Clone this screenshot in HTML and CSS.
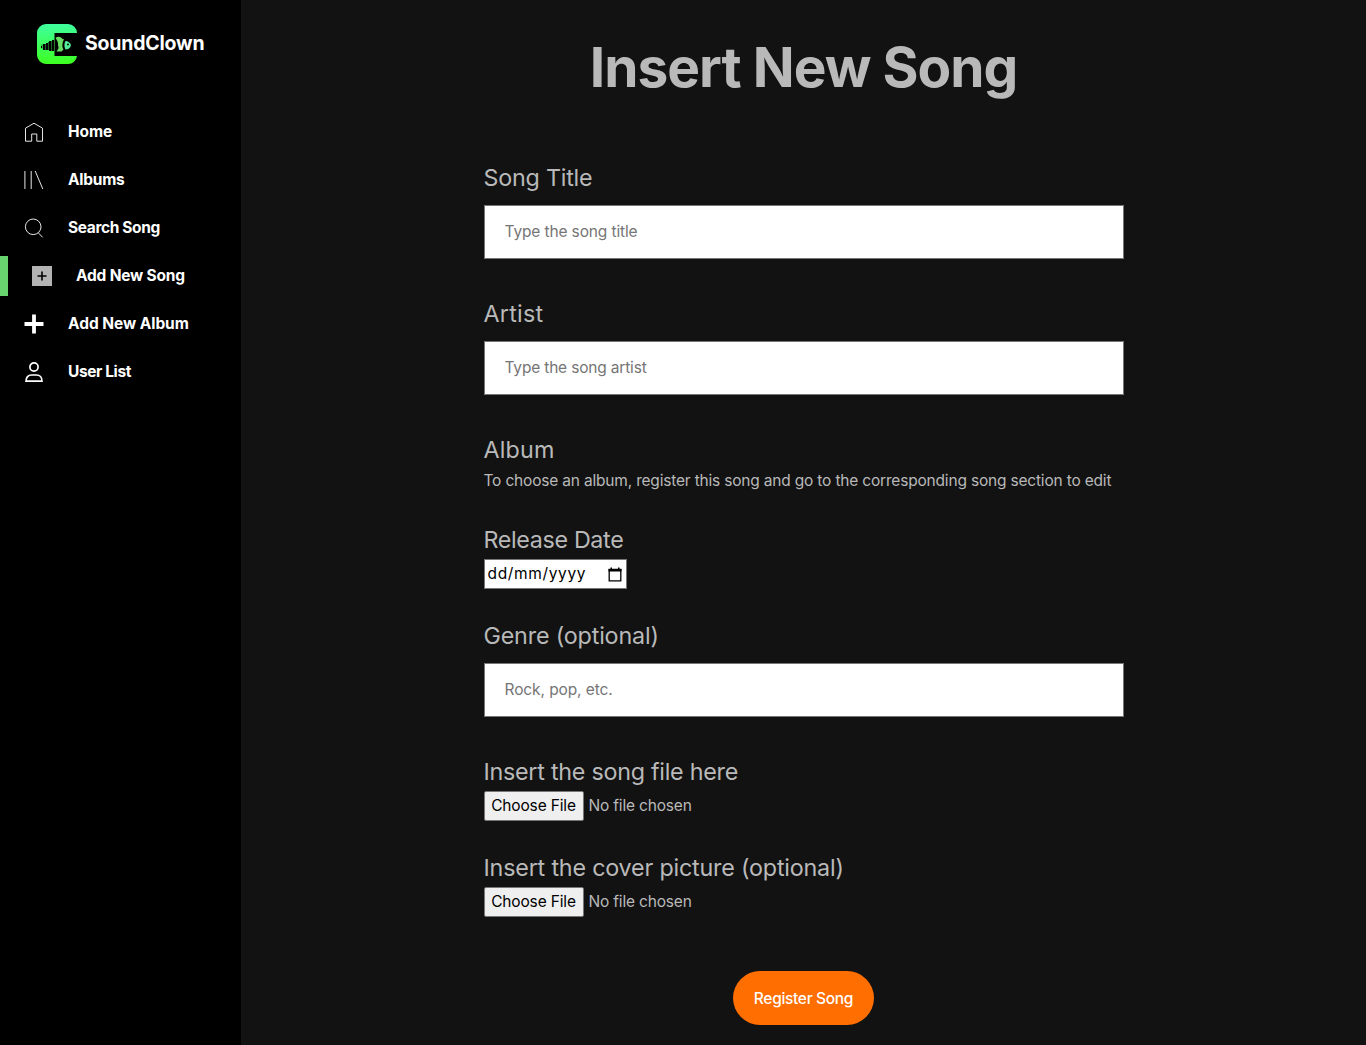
FILE: index.html
```html
<!DOCTYPE html>
<html lang="en">
<head>
<meta charset="utf-8">
<title>SoundClown</title>
<link rel="stylesheet" href="styles.css">
</head>
<body>
<aside class="sidebar">
  <a class="brand">
    <svg class="logo" width="40" height="40" viewBox="0 0 40 40">
      <defs><linearGradient id="lg" x1="0" y1="0" x2="0" y2="1"><stop offset="0" stop-color="#3fff9f"/><stop offset="1" stop-color="#3dff20"/></linearGradient></defs>
      <path fill="url(#lg)" d="M9 0h22a9 9 0 0 1 9 9H17.5v23H40a9 9 0 0 1-9 8H9a9 9 0 0 1-9-9V9a9 9 0 0 1 9-9z"/>
      <path d="M4 22h1v2H4zM6 20h2v6H6zM9 19h2v7H9zM12 17h2v10h-2zM15 16h2v11h-2z"/>
      <path stroke="#000" stroke-opacity=".6" d="M5 20.5v4M8.500 20v6M11.500 18v8M14.500 17v10"/>
      <path fill="#67df65" d="M18.500 14c2-2 5-1.500 6.500.5l2 1c-2 3-2 8-.5 10l-2 2h-5c1-2 3-3 1.500-6 .5-3-1-5-2.500-7.500z"/>
      <path fill="#55ef9b" d="M28.500 17c2.500 0 5 2 5.500 4-.5 3-3 4.500-5.500 4.500-1.500-2.500-1.500-6 0-8.500z"/>
      <circle cx="31" cy="20.500" r=".9"/>
    </svg>
    <span class="brand-name">SoundClown</span>
  </a>
  <nav class="menu">
    <a class="item"><svg class="icon thin" viewBox="0 0 20 20"><path d="M1.500 6.200 10 1.200l8.500 5v13h-5.700v-7.200H7.700v7.200H1.500z"/></svg><span class="t-home">Home</span></a>
    <a class="item"><svg class="icon thin" viewBox="0 0 20 20"><path d="M.9 1v18M7.200 1v18M11.200 1l7.600 18"/></svg><span class="t-albums">Albums</span></a>
    <a class="item"><svg class="icon thin" viewBox="0 0 20 20"><circle cx="9.200" cy="8.800" r="7.800"/><path d="m14.300 14.800 4.300 4.500"/></svg><span class="t-search">Search Song</span></a>
    <a class="item active"><svg class="icon" viewBox="0 0 20 20"><path fill="#b3b3b3" d="M0 0h20v20H0z"/><path stroke="#000" stroke-width="1.600" d="M10 5.500v9M5.500 10h9"/></svg><span class="t-song">Add New Song</span></a>
    <a class="item"><svg class="icon" viewBox="0 0 20 20"><path stroke="#fff" stroke-width="3.800" d="M10 .5v19M.5 10h19"/></svg><span class="t-album">Add New Album</span></a>
    <a class="item"><svg class="icon user" viewBox="0 0 20 20"><circle cx="10" cy="5" r="4.100"/><path d="M2 19.200c0-3.800 2.300-6.200 5.500-6.200h5c3.200 0 5.500 2.400 5.500 6.200z"/></svg><span class="t-user">User List</span></a>
  </nav>
</aside>
<main class="content">
  <h1 class="title">Insert New Song</h1>
  <form class="form">
    <div class="field"><label class="l-title">Song Title</label><input class="text p-title" placeholder="Type the song title"></div>
    <div class="field"><label class="l-artist">Artist</label><input class="text p-artist" placeholder="Type the song artist"></div>
    <div class="field short"><label class="l-album">Album</label><p class="note">To choose an album, register this song and go to the corresponding song section to edit</p></div>
    <div class="field compact"><label class="l-date">Release Date</label>
      <div class="date"><span>dd/mm/yyyy</span><svg width="14" height="15" viewBox="0 0 14 15"><path fill="none" stroke="#000" stroke-width="1.300" d="M1.200 2.500h11.600v11.300H1.200z"/><path d="M.5 2h13v2.500H.5zM2.500.5H4V3H2.500zM10 .5h1.500V3H10z"/></svg></div></div>
    <div class="field"><label class="l-genre">Genre (optional)</label><input class="text p-genre" placeholder="Rock, pop, etc."></div>
    <div class="field compact"><label class="l-file">Insert the song file here</label>
      <div class="file"><button type="button" class="choose">Choose File</button><span class="nofile">No file chosen</span></div></div>
    <div class="field compact"><label class="l-cover">Insert the cover picture (optional)</label>
      <div class="file"><button type="button" class="choose">Choose File</button><span class="nofile">No file chosen</span></div></div>
    <button type="button" class="submit">Register Song</button>
  </form>
</main>
</body>
</html>
```
FILE: styles.css
```css
* { box-sizing: border-box; }
body {
  margin: 0;
  height: 1045px;
  display: flex;
  overflow: hidden;
  background: #121212;
  color: #b9b9b9;
  font-family: Inter, "Liberation Sans", sans-serif;
  font-size: 15.500px;
  white-space: nowrap;
}
.sidebar { width: 241px; background: #000; color: #fff; }
.brand { display: flex; align-items: center; gap: 8px; height: 40px; margin: 24px 0 0 37px; }
.brand-name { padding-bottom: 2px; font-size: 19.500px; font-weight: 650; letter-spacing: -.2px; }
.menu { display: flex; flex-direction: column; gap: 8px; margin-top: 48px; }
.item { display: flex; align-items: center; gap: 24px; height: 40px; padding-left: 24px; font-weight: 650; }
.item span { padding-bottom: 2px; }
.item.active { border-left: 8px solid #67d46f; }
.t-home { letter-spacing: -.1px; }
.t-albums { letter-spacing: -.25px; }
.t-search { letter-spacing: -.37px; }
.t-song { letter-spacing: -.2px; }
.t-album { letter-spacing: -.05px; }
.t-user { letter-spacing: -.4px; }
.icon { width: 20px; height: 20px; overflow: visible; }
.thin { fill: none; stroke: #fff; stroke-width: .9; }
.user { fill: none; stroke: #fff; stroke-width: 1.700; }
.content { flex: 1; display: flex; flex-direction: column; align-items: center; }
.title { margin: 31px 0 59px; height: 72px; line-height: 72px; font-size: 55px; font-weight: 700; letter-spacing: -1px; }
.form { width: 640px; display: flex; flex-direction: column; }
.field { height: 136px; display: flex; flex-direction: column; align-items: flex-start; }
.field label { height: 43px; line-height: 32px; font-size: 23.300px; }
.field.short { height: 90px; }
.field.compact { height: 96px; }
.field.compact label { height: 35px; }
.field.short label { height: 37px; }
.field label.l-date, .field.compact label { flex-shrink: 0; }
.l-title { letter-spacing: -.22px; }
.l-artist { letter-spacing: .25px; }
.l-album { letter-spacing: .2px; }
.l-date { letter-spacing: -.35px; }
.l-genre { letter-spacing: -.17px; }
.l-file { letter-spacing: -.26px; }
.l-cover { letter-spacing: -.19px; }
.text { width: 640px; height: 54px; padding: 0 20px 2px; border: 1px solid #767676; background: #fff; font: inherit; }
.text::placeholder { color: #757575; opacity: 1; }
.p-title { letter-spacing: -.13px; }
.p-artist { letter-spacing: -.18px; }
.p-genre { letter-spacing: -.1px; }
.note { margin: 0; line-height: 20px; letter-spacing: -.187px; }
.date { width: 143px; height: 30px; padding: 0 4px 0 3px; display: flex; align-items: center; justify-content: space-between; background: #fff; color: #000; border: 1px solid #767676; }
.date span { padding-bottom: 2px; letter-spacing: .65px; }
.file { display: flex; align-items: center; gap: 5px; height: 30px; }
.choose { width: 100px; height: 30px; padding: 0 0 2px; font: inherit; letter-spacing: -.15px; background: #efefef; color: #000; border: 1px solid #767676; border-radius: 2px; }
.nofile { padding-bottom: 2px; letter-spacing: -.18px; }
.submit { align-self: center; width: 141px; height: 54px; margin-top: 23px; padding: 0; border: 0; border-radius: 27px; background: #ff6e00; color: #fff; font: inherit; font-weight: 550; letter-spacing: -.32px; }
```
